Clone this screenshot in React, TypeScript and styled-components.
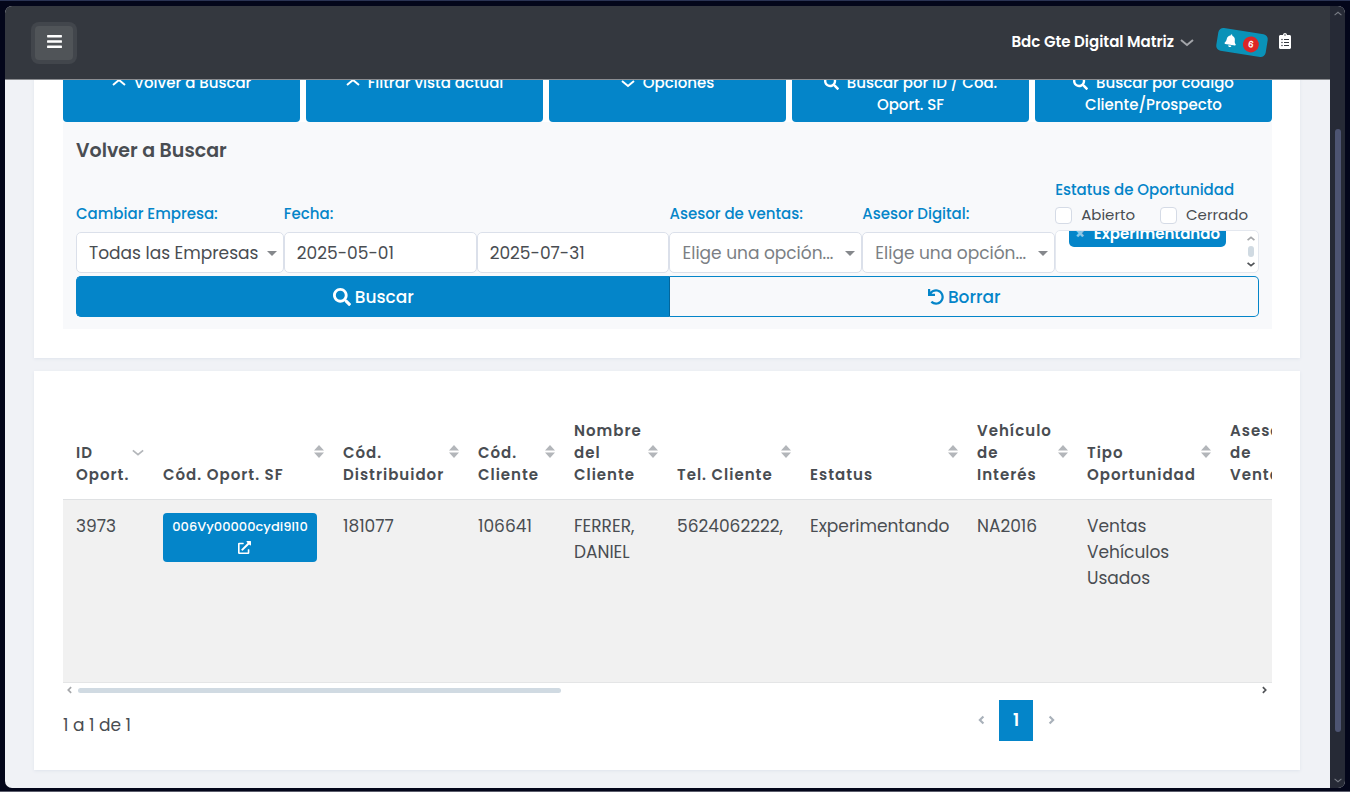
import React from 'react';
import styled, { createGlobalStyle, css } from 'styled-components';
import {
  FaBars,
  FaBell,
  FaClipboardList,
  FaExternalLinkAlt,
  FaSearch,
  FaUndo,
} from 'react-icons/fa';

const GlobalStyle = createGlobalStyle`
  *, *::before, *::after { box-sizing: border-box; }
  body {
    margin: 0;
    background: #ffffff;
    color: #494d52;
    font-family: Poppins, Inter, "Liberation Sans", sans-serif;
    font-size: 17px;
    line-height: 26px;
  }
  button, input, select { font: inherit; color: inherit; }
`;

const BLUE = '#0485c9';

const Desktop = styled.div`
  height: calc(100vh - 7px);
  padding: 6px 5px 3px;
  background: #03061a;
  border-bottom: 1px solid #5b5d6c;
  box-shadow: inset 0 1px 0 #2a3353;
`;

const Window = styled.div`
  display: flex;
  height: 100%;
  border-radius: 7px;
  overflow: hidden;
  background: #f0f2f6;
`;

const Page = styled.div`
  flex: 1;
  min-width: 0;
  display: flex;
  flex-direction: column;
`;

const Header = styled.header`
  flex: none;
  position: relative;
  z-index: 1;
  display: flex;
  align-items: center;
  justify-content: space-between;
  height: 74px;
  padding: 0 37px 0 30px;
  background: #34383f;
  border-bottom: 1px solid #8a8c90;
  color: #ffffff;
`;

const MenuButton = styled.button`
  display: flex;
  align-items: center;
  justify-content: center;
  width: 38px;
  height: 34px;
  padding: 0 0 3px;
  border: 0;
  border-radius: 4px;
  background: #505458;
  box-shadow: 0 0 0 4px #42464c;
  color: #ffffff;
  font-size: 17px;
`;

const HeaderTools = styled.div`
  display: flex;
  align-items: center;
  padding-bottom: 2px;
`;

const UserButton = styled.button`
  display: flex;
  align-items: center;
  gap: 6px;
  padding: 0;
  border: 0;
  background: none;
  color: #ffffff;
  font-size: 15px;
  font-weight: 600;
`;

const AlertButton = styled.button`
  display: flex;
  align-items: center;
  justify-content: space-between;
  width: 50px;
  height: 23px;
  margin: 2px 10px 0 23px;
  padding: 0 8px 0 7px;
  border: 0;
  border-radius: 5px;
  background: #0a92b8;
  color: #ffffff;
  font-size: 13px;
  transform: rotate(9deg);
`;

const Count = styled.span`
  width: 16px;
  height: 16px;
  border-radius: 8px;
  background: #dc2626;
  font-size: 9px;
  font-weight: 600;
  line-height: 16px;
  text-align: center;
`;

const NotesButton = styled.button`
  display: flex;
  padding: 0 0 2px;
  border: 0;
  background: none;
  color: #ffffff;
  font-size: 16px;
`;

const Main = styled.main`
  flex: 1;
  min-height: 0;
  overflow: hidden;
  padding: 0 30px 0 29px;
`;

const Card = styled.section<{ $scrolled?: boolean }>`
  padding: ${(p) => (p.$scrolled ? '0 28px 29px 29px' : '34px 28px 29px 29px')};
  margin-top: ${(p) => (p.$scrolled ? '-14px' : '13px')};
  background: #ffffff;
  box-shadow: 0 1px 3px #dfe4ec;
`;

const Tabs = styled.div`
  display: grid;
  grid-template-columns: repeat(5, 1fr);
  gap: 6px;
`;

const TabButton = styled.button`
  display: flex;
  justify-content: center;
  min-height: 56px;
  padding: 6px 30px;
  border: 0;
  border-radius: 4px;
  background: ${BLUE};
  color: #ffffff;
  font-size: 15px;
  font-weight: 500;
  line-height: 22px;
  svg { vertical-align: -2px; margin-right: 8px; }
`;

const Panel = styled.div`
  padding: 14px 13px 12px;
  background: #f8f9fb;
`;

const Title = styled.h2`
  margin: 0 0 13px;
  font-size: 19px;
  font-weight: 600;
  line-height: 30px;
`;

const Filters = styled.form`
  display: grid;
  grid-template-columns: 208fr 386fr 193fr 193fr 204fr;
  align-items: end;
  row-gap: 3px;
`;

const Field = styled.div`
  display: flex;
  flex-direction: column;
  gap: 7px;
  min-width: 0;
`;

const labelText = css`
  color: ${BLUE};
  font-size: 15px;
  font-weight: 500;
  line-height: 22px;
`;

const Label = styled.label`${labelText}`;

const Pair = styled.div`
  display: grid;
  grid-template-columns: 1fr 1fr;
`;

const control = css`
  width: 100%;
  height: 41px;
  padding: 0 12px;
  border: 1px solid #dbe0ea;
  border-radius: 5px;
  background: #ffffff;
`;

const TextInput = styled.input`${control}`;

const SelectBox = styled.div`
  position: relative;
`;

const Select = styled.select<{ $empty?: boolean }>`
  ${control}
  appearance: none;
  color: ${(p) => (p.$empty ? '#7b7f84' : '#494d52')};
`;

const Caret = styled.span`
  position: absolute;
  right: 7px;
  top: 19px;
  border: 5px solid transparent;
  border-top: 5px solid #85888c;
  border-bottom: 0;
  pointer-events: none;
`;

const StatusField = styled.fieldset`
  min-width: 0;
  margin: 0;
  padding: 0;
  border: 0;
`;

const Legend = styled.legend`
  ${labelText}
  padding: 0;
`;

const Checks = styled.div`
  display: flex;
  justify-content: space-between;
  padding-right: 11px;
  margin: 3px 0 4px;
`;

const CheckLabel = styled.label`
  display: flex;
  align-items: center;
  gap: 9px;
  font-size: 15px;
  line-height: 22px;
`;

const Check = styled.input`
  appearance: none;
  width: 17px;
  height: 17px;
  margin: 0;
  border: 1px solid #d5dbe6;
  border-radius: 4px;
  background: #ffffff;
`;

const TagBox = styled.div`
  display: flex;
  justify-content: space-between;
  height: 43px;
  padding: 0 3px 0 13px;
  border: 1px solid #e4e8ef;
  border-radius: 5px;
  background: #ffffff;
  overflow: hidden;
`;

const Tag = styled.span`
  display: flex;
  align-items: center;
  gap: 9px;
  height: 26px;
  margin-top: -10px;
  padding: 0 6px;
  border-radius: 5px;
  background: ${BLUE};
  color: #ffffff;
  font-size: 15px;
  font-weight: 600;
`;

const TagRemove = styled.button`
  padding: 0;
  border: 0;
  background: none;
  color: #8cc8e8;
  font-size: 15px;
  font-weight: 700;
  line-height: 20px;
`;

const TagScroll = styled.div`
  display: flex;
  flex-direction: column;
  align-items: center;
  justify-content: space-between;
  padding: 4px 0 4px;
`;

const TagThumb = styled.div`
  width: 6px;
  height: 11px;
  border-radius: 3px;
  background: #d0dae2;
`;

const Actions = styled.div`
  grid-column: 1 / -1;
  display: grid;
  grid-template-columns: 595fr 589fr;
`;

const ActionButton = styled.button<{ $primary?: boolean }>`
  display: flex;
  align-items: center;
  justify-content: center;
  gap: 4px;
  height: 41px;
  border: 1px solid ${BLUE};
  border-radius: ${(p) => (p.$primary ? '5px 0 0 5px' : '0 5px 5px 0')};
  border-left-width: ${(p) => (p.$primary ? '1px' : '0')};
  border-right-color: ${(p) => (p.$primary ? '#03669b' : BLUE)};
  background: ${(p) => (p.$primary ? BLUE : 'transparent')};
  color: ${(p) => (p.$primary ? '#ffffff' : BLUE)};
  font-weight: 500;
`;

const TableScroll = styled.div`
  overflow: hidden;
`;

const Table = styled.table`
  width: 1330px;
  table-layout: fixed;
  border-collapse: collapse;
`;

const Th = styled.th`
  position: relative;
  height: 94px;
  padding: 13px;
  border-bottom: 1px solid #dfe1e3;
  font-size: 15px;
  font-weight: 600;
  letter-spacing: 1px;
  line-height: 22px;
  text-align: left;
  vertical-align: bottom;
`;

const HeadText = styled.span`
  display: block;
  white-space: pre;
`;

const SortMark = styled.span`
  position: absolute;
  right: 6px;
  top: 0;
  bottom: 0;
  display: flex;
  align-items: center;
`;

const Td = styled.td`
  height: 183px;
  padding: 13px;
  border-bottom: 1px solid #e4e5e6;
  background: #f1f1f1;
  vertical-align: top;
  overflow-wrap: normal;
`;

const RecordLink = styled.a`
  display: flex;
  flex-direction: column;
  align-items: center;
  width: 154px;
  padding: 4px 8px 8px;
  border-radius: 4px;
  background: ${BLUE};
  color: #ffffff;
  font-size: 13px;
  font-weight: 500;
  line-height: 20px;
  text-decoration: none;
  svg { margin: 4px 0 0 9px; }
`;

const HScroll = styled.div`
  display: flex;
  align-items: center;
  gap: 4px;
  height: 15px;
  padding: 0 4px 0 3px;
`;

const HTrack = styled.div`
  flex: 1;
`;

const HThumb = styled.div`
  width: 41%;
  height: 5px;
  border-radius: 3px;
  background: #d0dae2;
`;

const Footer = styled.footer`
  display: grid;
  grid-template-columns: 7fr 5fr;
  align-items: center;
  padding-top: 2px;
`;

const Summary = styled.p`
  margin: 10px 0 0;
`;

const Pager = styled.nav`
  display: flex;
  align-items: center;
  justify-content: center;
  gap: 6px;
  padding-right: 8px;
`;

const PageButton = styled.button<{ $current?: boolean }>`
  display: flex;
  align-items: center;
  justify-content: center;
  width: ${(p) => (p.$current ? '34px' : '23px')};
  height: 41px;
  padding: 0;
  border: 0;
  background: ${(p) => (p.$current ? BLUE : 'transparent')};
  color: ${(p) => (p.$current ? '#ffffff' : '#a9b1ba')};
  font-weight: 600;
`;

const VScroll = styled.div`
  flex: none;
  display: flex;
  flex-direction: column;
  align-items: center;
  justify-content: space-between;
  width: 15px;
  padding: 4px 0;
  background: #262a36;
`;

const VTrack = styled.div`
  flex: 1;
  display: grid;
  grid-template-rows: 111fr 604fr 44fr;
`;

const VThumb = styled.div`
  grid-row: 2;
  width: 6px;
  border-radius: 3px;
  background: #4d5472;
`;

type Direction = 'up' | 'down' | 'left' | 'right';

const points: Record<Direction, string> = {
  up: '1,9 7,4 13,9',
  down: '1,5 7,10 13,5',
  left: '9,2 4,7 9,12',
  right: '5,2 10,7 5,12',
};

const Chevron = ({
  dir,
  size = 14,
  color = 'currentColor',
  weight = 2,
}: {
  dir: Direction;
  size?: number;
  color?: string;
  weight?: number;
}) => (
  <svg width={size} height={size} viewBox="0 0 14 14" fill="none" stroke={color} strokeWidth={weight} aria-hidden="true">
    <polyline points={points[dir]} />
  </svg>
);

const SortIcon = () => (
  <svg width="10" height="13" viewBox="0 0 10 13" fill="#b3b6ba" aria-hidden="true">
    <path d="M5 0 10 5.5H0ZM5 13 0 7.5h10Z" />
  </svg>
);

const columns = [
  { label: 'ID\nOport.', width: 87 },
  { label: 'Cód. Oport. SF', width: 180 },
  { label: 'Cód.\nDistribuidor', width: 135 },
  { label: 'Cód.\nCliente', width: 96 },
  { label: 'Nombre\ndel\nCliente', width: 103 },
  { label: 'Tel. Cliente', width: 133 },
  { label: 'Estatus', width: 167 },
  { label: 'Vehículo\nde\nInterés', width: 110 },
  { label: 'Tipo\nOportunidad', width: 143 },
  { label: 'Asesor\nde\nVentas', width: 176 },
];

const cells: React.ReactNode[] = [
  '3973',
  <RecordLink href="#oportunidad">
    006Vy00000cydi9I10
    <FaExternalLinkAlt size={13} />
  </RecordLink>,
  '181077',
  '106641',
  'FERRER, DANIEL',
  '5624062222,',
  'Experimentando',
  'NA2016',
  'Ventas Vehículos Usados',
  '',
];

export default function App() {
  return (
    <>
      <GlobalStyle />
      <Desktop>
        <Window>
          <Page>
            <Header>
              <MenuButton type="button" aria-label="Menú">
                <FaBars />
              </MenuButton>
              <HeaderTools>
                <UserButton type="button">
                  Bdc Gte Digital Matriz
                  <Chevron dir="down" color="#a3a5a9" />
                </UserButton>
                <AlertButton type="button" aria-label="Notificaciones">
                  <FaBell />
                  <Count>6</Count>
                </AlertButton>
                <NotesButton type="button" aria-label="Pendientes">
                  <FaClipboardList />
                </NotesButton>
              </HeaderTools>
            </Header>

            <Main>
              <Card $scrolled>
                <Tabs>
                  <TabButton type="button">
                    <span><Chevron dir="up" />Volver a Buscar</span>
                  </TabButton>
                  <TabButton type="button">
                    <span><Chevron dir="up" />Filtrar vista actual</span>
                  </TabButton>
                  <TabButton type="button">
                    <span><Chevron dir="down" />Opciones</span>
                  </TabButton>
                  <TabButton type="button">
                    <span><FaSearch />Buscar por ID / Cód. Oport. SF</span>
                  </TabButton>
                  <TabButton type="button">
                    <span><FaSearch />Buscar por código Cliente/Prospecto</span>
                  </TabButton>
                </Tabs>

                <Panel>
                  <Title>Volver a Buscar</Title>
                  <Filters>
                    <Field>
                      <Label htmlFor="empresa">Cambiar Empresa:</Label>
                      <SelectBox>
                        <Select id="empresa">
                          <option>Todas las Empresas</option>
                        </Select>
                        <Caret />
                      </SelectBox>
                    </Field>
                    <Field>
                      <Label htmlFor="desde">Fecha:</Label>
                      <Pair>
                        <TextInput id="desde" defaultValue="2025-05-01" />
                        <TextInput aria-label="Fecha final" defaultValue="2025-07-31" />
                      </Pair>
                    </Field>
                    <Field>
                      <Label htmlFor="ventas">Asesor de ventas:</Label>
                      <SelectBox>
                        <Select id="ventas" $empty>
                          <option>Elige una opción...</option>
                        </Select>
                        <Caret />
                      </SelectBox>
                    </Field>
                    <Field>
                      <Label htmlFor="digital">Asesor Digital:</Label>
                      <SelectBox>
                        <Select id="digital" $empty>
                          <option>Elige una opción...</option>
                        </Select>
                        <Caret />
                      </SelectBox>
                    </Field>
                    <StatusField>
                      <Legend>Estatus de Oportunidad</Legend>
                      <Checks>
                        <CheckLabel><Check type="checkbox" />Abierto</CheckLabel>
                        <CheckLabel><Check type="checkbox" />Cerrado</CheckLabel>
                      </Checks>
                      <TagBox>
                        <Tag>
                          <TagRemove type="button" aria-label="Quitar Experimentando">×</TagRemove>
                          Experimentando
                        </Tag>
                        <TagScroll>
                          <Chevron dir="up" size={8} color="#a5a7aa" weight={3} />
                          <TagThumb />
                          <Chevron dir="down" size={8} color="#505357" weight={3} />
                        </TagScroll>
                      </TagBox>
                    </StatusField>
                    <Actions>
                      <ActionButton type="button" $primary>
                        <FaSearch size={18} />Buscar
                      </ActionButton>
                      <ActionButton type="reset">
                        <FaUndo size={16} />Borrar
                      </ActionButton>
                    </Actions>
                  </Filters>
                </Panel>
              </Card>

              <Card>
                <TableScroll>
                  <Table>
                    <colgroup>
                      {columns.map((c) => <col key={c.label} width={c.width} />)}
                    </colgroup>
                    <thead>
                      <tr>
                        {columns.map((c, i) => (
                          <Th key={c.label} scope="col">
                            <HeadText>{c.label}</HeadText>
                            <SortMark>
                              {i === 0 ? <Chevron dir="down" size={12} color="#b3b6ba" /> : <SortIcon />}
                            </SortMark>
                          </Th>
                        ))}
                      </tr>
                    </thead>
                    <tbody>
                      <tr>
                        {cells.map((cell, i) => <Td key={columns[i].label}>{cell}</Td>)}
                      </tr>
                    </tbody>
                  </Table>
                </TableScroll>
                <HScroll>
                  <Chevron dir="left" size={8} color="#a5a7aa" weight={3} />
                  <HTrack><HThumb /></HTrack>
                  <Chevron dir="right" size={8} color="#505357" weight={3} />
                </HScroll>
                <Footer>
                  <Summary>1 a 1 de 1</Summary>
                  <Pager aria-label="Paginación">
                    <PageButton type="button" aria-label="Anterior">
                      <Chevron dir="left" size={10} weight={3} />
                    </PageButton>
                    <PageButton type="button" $current>1</PageButton>
                    <PageButton type="button" aria-label="Siguiente">
                      <Chevron dir="right" size={10} weight={3} />
                    </PageButton>
                  </Pager>
                </Footer>
              </Card>
            </Main>
          </Page>
          <VScroll>
            <Chevron dir="up" size={8} color="#777b84" />
            <VTrack><VThumb /></VTrack>
            <Chevron dir="down" size={8} color="#777b84" />
          </VScroll>
        </Window>
      </Desktop>
    </>
  );
}
